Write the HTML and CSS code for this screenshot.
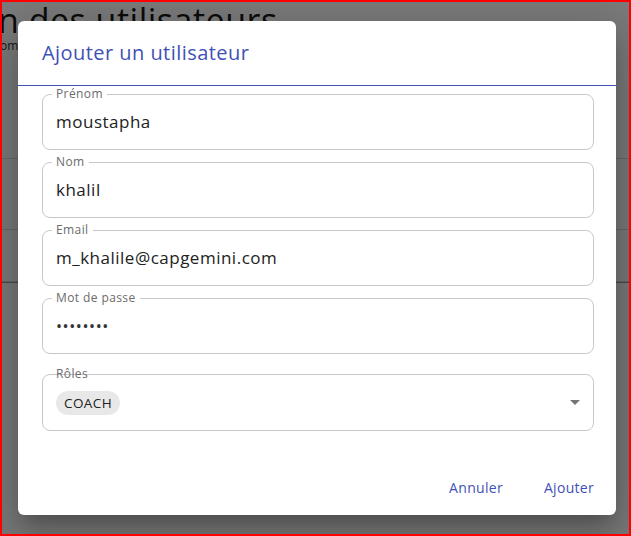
FILE: index.html
```html
<!DOCTYPE html>
<html lang="fr">
<head>
<meta charset="utf-8">
<title>Ajouter un utilisateur</title>
<link rel="stylesheet" href="styles.css">
</head>
<body>
<div class="frame">
  <div class="page">
    <h1 class="page-title">n des utilisateurs</h1>
    <div class="page-sub">om</div>
    <div class="table">
      <div class="row"></div>
      <div class="row"></div>
      <div class="row"></div>
      <div class="row last"></div>
    </div>
  </div>
  <div class="overlay">
    <div class="dialog">
      <div class="dialog-header">
        <h2 class="dialog-title">Ajouter un utilisateur</h2>
      </div>
      <div class="dialog-content">
        <fieldset class="field">
          <legend class="field-label">Prénom</legend>
          <div class="field-value">moustapha</div>
        </fieldset>
        <fieldset class="field">
          <legend class="field-label">Nom</legend>
          <div class="field-value">khalil</div>
        </fieldset>
        <fieldset class="field">
          <legend class="field-label">Email</legend>
          <div class="field-value">m_khalile@capgemini.com</div>
        </fieldset>
        <fieldset class="field">
          <legend class="field-label">Mot de passe</legend>
          <div class="field-value password">••••••••</div>
        </fieldset>
        <div class="select-field">
          <span class="select-label">Rôles</span>
          <div class="select-body">
            <span class="chip">COACH</span>
            <svg class="arrow" width="10" height="5" viewBox="0 0 10 5"><path d="M0 0 L10 0 L5 5 Z" fill="#757575"/></svg>
          </div>
        </div>
      </div>
      <div class="dialog-actions">
        <button class="btn">Annuler</button>
        <button class="btn">Ajouter</button>
      </div>
    </div>
  </div>
</div>
</body>
</html>
```

FILE: styles.css
```css
html, body {
  margin: 0;
  padding: 0;
}
body {
  font-family: "Open Sans", "Liberation Sans", sans-serif;
}
.frame {
  position: relative;
  width: 631px;
  height: 536px;
  box-sizing: border-box;
  border: 2px solid #ff0000;
  overflow: hidden;
  background: #ffffff;
}
.page-title {
  margin: 0 0 0 -4px;
  padding-top: 1px;
  font-size: 34px;
  font-weight: 400;
  line-height: 34px;
  letter-spacing: 0.5px;
  color: #1a1a1a;
  white-space: nowrap;
}
.page-sub {
  margin: 3px 0 0 -2px;
  font-size: 12px;
  line-height: 12px;
  color: #333;
}
.table {
  margin-top: 28px;
}
.row {
  height: 78px;
  border-bottom: 1px solid #dcdcdc;
}
.row:nth-child(2) { height: 70px; }
.row:nth-child(3) { height: 51px; }
.row.last {
  height: 0;
  border-bottom: 1px solid #9a9a9a;
}
.overlay {
  position: absolute;
  inset: 0;
  background: rgba(0, 0, 0, 0.52);
}
.dialog {
  position: absolute;
  left: 16px;
  top: 19px;
  width: 598px;
  height: 494px;
  background: #fff;
  border-radius: 6px;
  box-shadow: 0 11px 15px -7px rgba(0,0,0,.2), 0 24px 38px 3px rgba(0,0,0,.14), 0 9px 46px 8px rgba(0,0,0,.12);
  display: flex;
  flex-direction: column;
}
.dialog-header {
  height: 65px;
  box-sizing: border-box;
  border-bottom: 1px solid #3f51b5;
  padding: 0 24px 2px;
  display: flex;
  align-items: center;
}
.dialog-title {
  margin: 0;
  font-size: 20px;
  font-weight: 500;
  color: #3f51b5;
  letter-spacing: 0.45px;
}
.dialog-content {
  padding: 0 22px 0 24px;
  display: flex;
  flex-direction: column;
  gap: 4px;
}
.field {
  margin: 0;
  padding: 0 0 0 13px;
  border: 1px solid #c8c8c8;
  border-radius: 8px;
  height: 64px;
  box-sizing: border-box;
  display: block;
}
.field-label {
  margin-left: -4px;
  padding: 0 4px;
  font-size: 12px;
  line-height: 16px;
  letter-spacing: 0.4px;
  color: #6b6b6b;
}
.field-value {
  font-size: 17px;
  line-height: 24px;
  letter-spacing: 0.5px;
  color: #222;
  margin-top: 8px;
}
.field-value.password {
  font-size: 16px;
  letter-spacing: 0.6px;
  color: #333;
}
.select-field {
  position: relative;
  margin-top: 16px;
  height: 57px;
  box-sizing: border-box;
  border: 1px solid #c8c8c8;
  border-radius: 8px;
}
.select-label {
  position: absolute;
  left: 13px;
  top: -9px;
  font-size: 12px;
  line-height: 16px;
  letter-spacing: 0.4px;
  color: #6b6b6b;
}
.select-body {
  height: 100%;
  display: flex;
  align-items: center;
  justify-content: space-between;
  padding: 0 13px 0 13px;
}
.chip {
  background: #e8e8e8;
  border-radius: 12px;
  padding: 0 8px;
  height: 24px;
  line-height: 24px;
  font-size: 13.5px;
  letter-spacing: 0.4px;
  color: #222;
}
.arrow {
  display: block;
}
.dialog-actions {
  margin-top: auto;
  height: 56px;
  padding: 0 14px 0 0;
  display: flex;
  justify-content: flex-end;
  align-items: center;
  gap: 25px;
}
.btn {
  font-family: inherit;
  background: none;
  border: none;
  padding: 0 8px;
  height: 36px;
  font-size: 14px;
  font-weight: 500;
  letter-spacing: 0.3px;
  color: #3f51b5;
  cursor: pointer;
}
```
